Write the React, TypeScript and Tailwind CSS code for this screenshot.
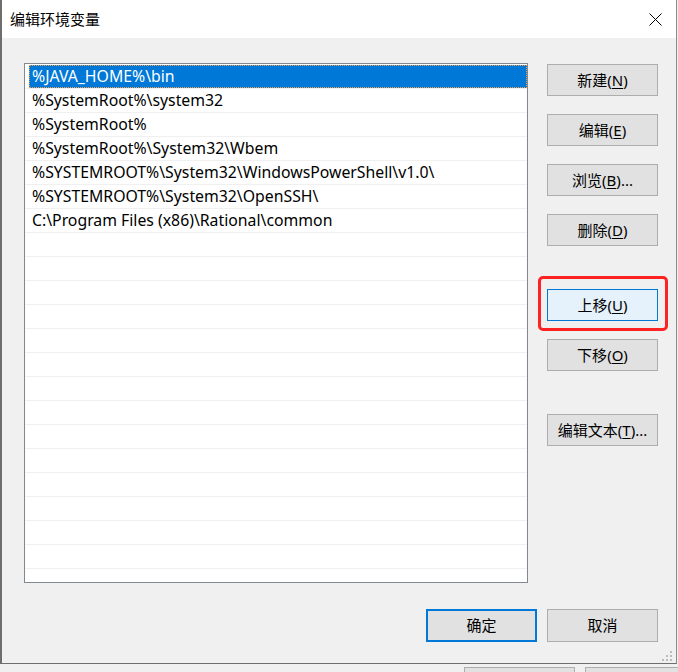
import React from "react";

const FONT = '"Segoe UI", "Noto Sans", "Noto Sans CJK SC", sans-serif';

const rows = [
  "%JAVA_HOME%\\bin",
  "%SystemRoot%\\system32",
  "%SystemRoot%",
  "%SystemRoot%\\System32\\Wbem",
  "%SYSTEMROOT%\\System32\\WindowsPowerShell\\v1.0\\",
  "%SYSTEMROOT%\\System32\\OpenSSH\\",
  "C:\\Program Files (x86)\\Rational\\common",
];

function Btn({ label, u, after, active }: { label: string; u?: string; after?: string; active?: boolean }) {
  return (
    <div
      className={
        "w-[111px] h-[32px] flex items-center justify-center border text-[15px] text-black " +
        (active ? "bg-[#e5f1fb] border-[#0078d7]" : "bg-[#e1e1e1] border-[#adadad]")
      }
    >
      <span>
        {label}
        {u ? (
          <>
            (<span className="underline underline-offset-2">{u}</span>)
          </>
        ) : null}
        {after}
      </span>
    </div>
  );
}

export default function App() {
  const total = 22;
  return (
    <div className="relative w-[678px] h-[672px] bg-[#f0f0f0] overflow-hidden" style={{ fontFamily: FONT }}>
      <div className="w-[677px] h-[664px] flex flex-col border-l-2 border-r border-b border-l-[#6e6e6e] border-r-[#8a8a8a] border-b-[#6e6e6e] bg-[#f0f0f0]">
        <div className="h-[38px] bg-white flex items-center justify-between pl-[8px] pr-[14px]">
          <span className="text-[15px] text-black leading-none">编辑环境变量</span>
          <svg width="13" height="13" viewBox="0 0 13 13" className="mt-[1px]">
            <path d="M0.5 0.5 L12.5 12.5 M12.5 0.5 L0.5 12.5" stroke="#000" strokeWidth="1" fill="none" />
          </svg>
        </div>
        <div className="flex-1 flex flex-col pl-[22px] pr-[18px] pt-[25px]">
          <div className="flex">
            <div className="w-[504px] h-[520px] border border-[#828790] bg-white overflow-hidden pt-[1px]">
              {Array.from({ length: total }).map((_, i) => (
                <div key={i} className="h-[24px] border-b border-[#f0f0f0] flex">
                  {i === 0 ? (
                    <div className="ml-[4px] flex-1 h-[23px] bg-[#0078d7] border border-dotted border-[#f0a050] flex items-center pl-[2px] pt-[1px] text-white text-[15.8px] leading-none">
                      {rows[0]}
                    </div>
                  ) : (
                    <div className="flex-1 flex items-center pl-[7px] pt-[1px] text-[15.8px] leading-none text-black">{rows[i] ?? ""}</div>
                  )}
                </div>
              ))}
            </div>
            <div className="ml-[19px] mt-[1px] flex flex-col">
              <Btn label="新建" u="N" />
              <div className="h-[18px]" />
              <Btn label="编辑" u="E" />
              <div className="h-[18px]" />
              <Btn label="浏览" u="B" after="..." />
              <div className="h-[18px]" />
              <Btn label="删除" u="D" />
              <div className="h-[43px]" />
              <Btn label="上移" u="U" active />
              <div className="h-[18px]" />
              <Btn label="下移" u="O" />
              <div className="h-[43px]" />
              <Btn label="编辑文本" u="T" after="..." />
            </div>
          </div>
          <div className="mt-[26px] flex justify-end gap-[10px]">
            <div className="w-[111px] h-[33px] border-2 border-[#0078d7] bg-[#e1e1e1] flex items-center justify-center text-[15px] text-black">
              确定
            </div>
            <div className="w-[111px] h-[33px] border border-[#adadad] bg-[#e1e1e1] flex items-center justify-center text-[15px] text-black">
              取消
            </div>
          </div>
        </div>
      </div>

      {/* resize grip */}
      <svg className="absolute left-[662px] top-[651px]" width="12" height="12" viewBox="0 0 12 12">
        <rect x="8" y="0" width="2" height="2" fill="#bcbcbc" />
        <rect x="4" y="4" width="2" height="2" fill="#bcbcbc" />
        <rect x="8" y="4" width="2" height="2" fill="#bcbcbc" />
        <rect x="0" y="8" width="2" height="2" fill="#bcbcbc" />
        <rect x="4" y="8" width="2" height="2" fill="#bcbcbc" />
        <rect x="8" y="8" width="2" height="2" fill="#bcbcbc" />
      </svg>

      {/* background window buttons peeking below */}
      <div className="absolute left-[464px] top-[667px] w-[111px] h-[20px] border border-[#adadad] bg-[#e1e1e1]" />
      <div className="absolute left-[585px] top-[667px] w-[111px] h-[20px] border border-[#adadad] bg-[#e1e1e1]" />

      {/* red annotation */}
      <div className="absolute left-[538px] top-[276px] w-[130px] h-[55px] border-[3px] border-[#ff2222] rounded-[5px]" />
    </div>
  );
}
